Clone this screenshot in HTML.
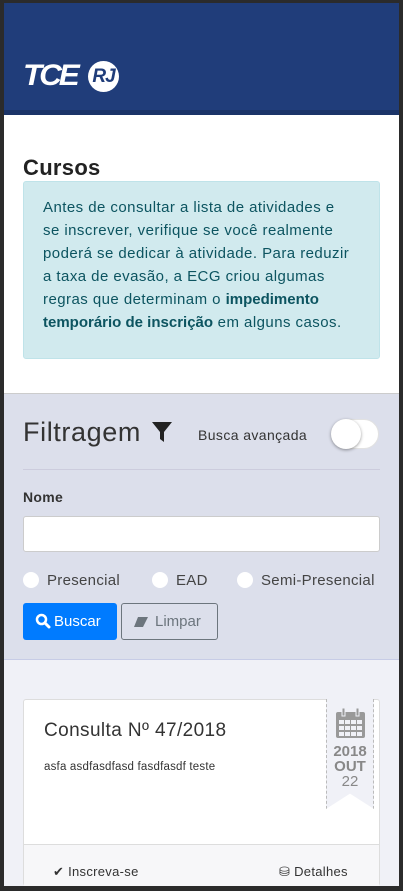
<!DOCTYPE html>
<html><head><meta charset="utf-8"><style>
*{margin:0;padding:0;box-sizing:border-box}
html,body{width:403px;height:891px;overflow:hidden}
body{background:#2b2b2b;position:relative;font-family:"Liberation Sans",sans-serif}
.a{position:absolute}
</style></head><body>
<div class="a" style="left:4px;top:3px;width:395px;height:883px;background:#f0f1f7"></div>
<div class="a" style="left:4px;top:3px;width:395px;height:107px;background:#203d7a"></div>
<div class="a" style="left:4px;top:110px;width:395px;height:5px;background:#1b3468"></div>
<div class="a" style="left:23px;top:58px;color:#fff;font:italic 900 30px 'Liberation Sans',sans-serif;letter-spacing:-3px;line-height:36px;transform:scaleX(1.05);transform-origin:left">TCE</div>
<div class="a" style="left:88px;top:61px;width:31px;height:31px;border-radius:50%;background:#fff;color:#203d7a;font:italic 900 19px 'Liberation Sans',sans-serif;line-height:31px;text-align:center;letter-spacing:-1px">RJ</div>
<div class="a" style="left:4px;top:115px;width:395px;height:278px;background:#fff"></div>
<div class="a" style="left:23px;top:155px;font-size:22px;font-weight:bold;color:#222;line-height:26px;letter-spacing:0.3px">Cursos</div>
<div class="a" style="left:23px;top:181px;width:357px;height:178px;background:#d1eaee;border:1px solid #bfe3e9;border-radius:3px"></div>
<div class="a" style="left:43px;top:196px;width:330px;font-size:15px;letter-spacing:0.45px;line-height:23px;color:#0c5460;white-space:nowrap">Antes de consultar a lista de atividades e<br>se inscrever, verifique se você realmente<br>poderá se dedicar à atividade. Para reduzir<br>a taxa de evasão, a ECG criou algumas<br>regras que determinam o <b style="letter-spacing:0">impedimento</b><br><b style="letter-spacing:0">temporário de inscrição</b> em alguns casos.</div>
<div class="a" style="left:4px;top:393px;width:395px;height:267px;background:#dcdfeb;border-top:1px solid #ccc;border-bottom:1px solid #c7cce6"></div>
<div class="a" style="left:23px;top:416px;font-size:27px;letter-spacing:0.6px;color:#333;line-height:32px">Filtragem</div>
<svg class="a" style="left:151px;top:421px" width="22" height="22" viewBox="0 0 22 22"><path d="M1 1H21L13 11V21L9 18V11Z" fill="#222"/></svg>
<div class="a" style="left:198px;top:427px;font-size:14px;letter-spacing:0.4px;color:#333">Busca avançada</div>
<div class="a" style="left:331px;top:419px;width:48px;height:30px;border-radius:15px;background:#fff;border:1px solid #e2e2e2"></div>
<div class="a" style="left:331px;top:419px;width:30px;height:30px;border-radius:50%;background:#fff;box-shadow:0 1px 3px rgba(0,0,0,.4)"></div>
<div class="a" style="left:23px;top:469px;width:357px;height:1px;background:#ccd"></div>
<div class="a" style="left:23px;top:489px;font-size:14px;font-weight:bold;color:#333;letter-spacing:0.3px">Nome</div>
<div class="a" style="left:23px;top:516px;width:357px;height:36px;background:#fff;border:1px solid #ccc;border-radius:3px"></div>
<div class="a" style="left:23px;top:572px;width:16px;height:16px;border-radius:50%;background:#fff"></div>
<div class="a" style="left:47px;top:572px;font-size:15px;color:#444;letter-spacing:0.3px">Presencial</div>
<div class="a" style="left:152px;top:572px;width:16px;height:16px;border-radius:50%;background:#fff"></div>
<div class="a" style="left:176px;top:572px;font-size:15px;color:#444;letter-spacing:0.3px">EAD</div>
<div class="a" style="left:237px;top:572px;width:16px;height:16px;border-radius:50%;background:#fff"></div>
<div class="a" style="left:261px;top:572px;font-size:15px;color:#444;letter-spacing:0.3px">Semi-Presencial</div>
<div class="a" style="left:23px;top:603px;width:94px;height:37px;background:#007bff;border-radius:3px;color:#fff;font-size:15px;line-height:37px;padding-left:31px">Buscar</div>
<svg class="a" style="left:35px;top:613px" width="16" height="16" viewBox="0 0 16 16"><circle cx="6.5" cy="6.5" r="4.5" fill="none" stroke="#fff" stroke-width="2.5"/><path d="M10 10L14 14" stroke="#fff" stroke-width="3" stroke-linecap="round"/></svg>
<div class="a" style="left:121px;top:603px;width:97px;height:37px;border:1px solid #6c757d;border-radius:3px;color:#6c757d;font-size:15px;line-height:35px;padding-left:33px">Limpar</div>
<svg class="a" style="left:133px;top:616px" width="16" height="12" viewBox="0 0 16 12"><path d="M5 1H15L10 11H1Z" fill="#6c757d"/></svg>
<div class="a" style="left:23px;top:699px;width:357px;height:187px;background:#fff;border:1px solid #ddd;border-radius:3px"></div>
<div class="a" style="left:24px;top:844px;width:355px;height:42px;background:#f7f7f9;border-top:1px solid #ddd"></div>
<div class="a" style="left:44px;top:720px;font-size:19px;color:#333;letter-spacing:0.4px">Consulta Nº 47/2018</div>
<div class="a" style="left:44px;top:761px;font-size:11.5px;color:#333;letter-spacing:0.2px">asfa asdfasdfasd fasdfasdf teste</div>
<div class="a" style="left:326px;top:699px;width:48px;height:110px;background:#f0f1f7;border-left:1px dashed #bbb;border-right:1px dashed #bbb;clip-path:polygon(0 0,100% 0,100% 100%,50% 86%,0 100%)"></div>
<svg class="a" style="left:335px;top:707px" width="31" height="32" viewBox="0 0 31 32"><rect x="1" y="5" width="29" height="26" rx="2" fill="#999"/><rect x="7" y="1" width="3" height="8" fill="#999" stroke="#f0f1f7" stroke-width="1"/><rect x="21" y="1" width="3" height="8" fill="#999" stroke="#f0f1f7" stroke-width="1"/><g fill="#f0f1f7"><rect x="4" y="13" width="5" height="4"/><rect x="10" y="13" width="5" height="4"/><rect x="16" y="13" width="5" height="4"/><rect x="22" y="13" width="5" height="4"/><rect x="4" y="19" width="5" height="4"/><rect x="10" y="19" width="5" height="4"/><rect x="16" y="19" width="5" height="4"/><rect x="22" y="19" width="5" height="4"/><rect x="4" y="25" width="5" height="4"/><rect x="10" y="25" width="5" height="4"/><rect x="16" y="25" width="5" height="4"/><rect x="22" y="25" width="5" height="4"/></g></svg>
<div class="a" style="left:326px;top:744px;width:48px;text-align:center;color:#888;font-size:15px;line-height:15px"><b>2018</b><br><b>OUT</b><br>22</div>
<div class="a" style="left:53px;top:864px;font-size:13px;color:#333;letter-spacing:0.3px">✔ Inscreva-se</div>
<div class="a" style="left:279px;top:864px;font-size:13px;color:#333;letter-spacing:0.3px">&#9921; Detalhes</div>
<div class="a" style="left:0;top:886px;width:403px;height:5px;background:#2b2b2b"></div>
</body></html>
